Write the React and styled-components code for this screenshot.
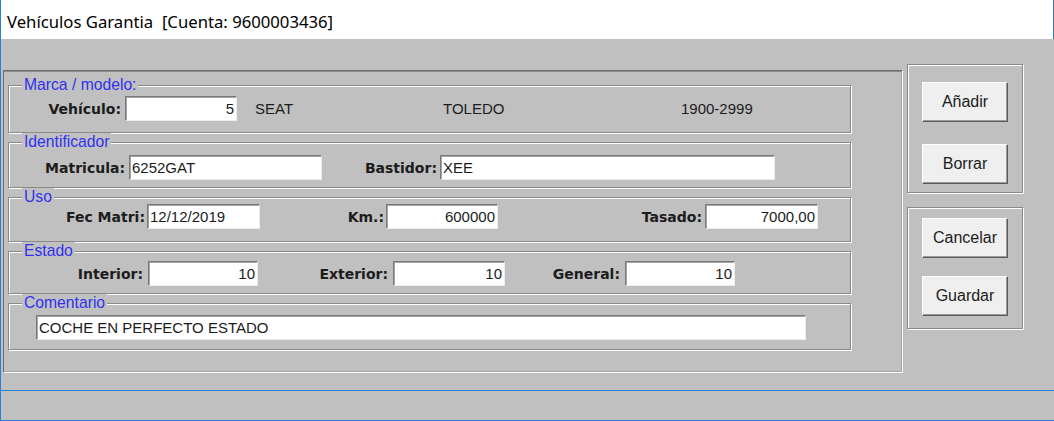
import React from "react";
import styled, { createGlobalStyle } from "styled-components";

const GlobalStyle = createGlobalStyle`
  html, body {
    margin: 0;
    padding: 0;
    background: #c0c0c0;
  }
`;

const Screen = styled.div`
  width: 1054px;
  height: 421px;
  display: flex;
  flex-direction: column;
  background: #c0c0c0;
  font-family: "Liberation Sans", Arial, sans-serif;
  overflow: hidden;
`;

const Window = styled.div`
  height: 391px;
  box-sizing: border-box;
  display: flex;
  flex-direction: column;
  border-left: 1px solid #2b7fd4;
  border-bottom: 1px solid #2b7fd4;
`;

const TitleBar = styled.div`
  height: 39px;
  flex: none;
  box-sizing: border-box;
  display: flex;
  align-items: center;
  padding: 3px 0 0 6px;
  background: #fff;
  border-right: 1px solid #2b7fd4;
  font-family: "Segoe UI", "Noto Sans", sans-serif;
  font-size: 16.7px;
  color: #000;
  white-space: pre;
`;

const Body = styled.div`
  flex: 1;
  display: flex;
  align-items: flex-start;
  padding: 25px 0 0 2px;
`;

/* sunken panel holding the group boxes */
const MainFrame = styled.div`
  width: 900px;
  height: 303px;
  margin-top: 6px;
  box-sizing: border-box;
  display: flex;
  flex-direction: column;
  gap: 9px;
  padding: 14px 0 0 4px;
  border: 1px solid;
  border-color: #6e6e6e #fff #fff #6e6e6e;
  box-shadow: inset 0 1px 0 #8c8c8c, inset -1px 0 0 #a8a8a8, inset 0 -1px 0 #a8a8a8;
`;

const GroupBox = styled.div`
  position: relative;
  width: 843px;
  height: ${(p) => p.$h}px;
  box-sizing: border-box;
  padding-top: ${(p) => p.$pt}px;
  border: 1px solid #8a8a8a;
  box-shadow: inset 1px 1px 0 #fff, 1px 1px 0 #fff;
`;

const Legend = styled.span`
  position: absolute;
  top: -10px;
  left: 13px;
  padding: 0 2px;
  background: #c0c0c0;
  color: #3030f2;
  font-size: 15.7px;
  line-height: 18px;
`;

const Row = styled.div`
  display: flex;
  align-items: center;
  height: 25px;
`;

const Label = styled.div`
  width: ${(p) => p.$w}px;
  box-sizing: border-box;
  padding-right: ${(p) => p.$pr || 4}px;
  text-align: right;
  font-family: "DejaVu Sans", Tahoma, sans-serif;
  font-weight: bold;
  font-size: 14px;
  color: #1c1c1c;
  white-space: nowrap;
`;

const Input = styled.input`
  width: ${(p) => p.$w}px;
  margin-left: ${(p) => p.$ml || 0}px;
  height: 25px;
  box-sizing: border-box;
  padding: 0 2px;
  border: 1px solid;
  border-color: #7a7a7a #ececec #ececec #7a7a7a;
  box-shadow: inset 1px 1px 0 #a4a4a4;
  background: #fff;
  outline: none;
  font-family: "Liberation Sans", Arial, sans-serif;
  font-size: 15px;
  color: #1c1c1c;
  text-align: ${(p) => (p.$right ? "right" : "left")};
`;

const Static = styled.div`
  width: ${(p) => (p.$w ? `${p.$w}px` : "auto")};
  margin-left: ${(p) => p.$ml || 0}px;
  font-size: 15px;
  color: #1c1c1c;
`;

const SideColumn = styled.div`
  display: flex;
  flex-direction: column;
  gap: 14px;
  margin-left: 4px;
`;

const ButtonBox = styled.div`
  width: 116px;
  height: ${(p) => p.$h}px;
  box-sizing: border-box;
  display: flex;
  flex-direction: column;
  align-items: center;
  gap: ${(p) => p.$gap}px;
  padding-top: ${(p) => p.$pt}px;
  border: 1px solid #8a8a8a;
  box-shadow: inset 1px 1px 0 #fff, 1px 1px 0 #fff;
`;

const Button = styled.button`
  width: 86px;
  height: 40px;
  box-sizing: border-box;
  background: #efefef;
  border: 1px solid;
  border-color: #fff #5a5a5a #5a5a5a #fff;
  box-shadow: inset -1px -1px 0 #9a9a9a;
  font-family: "Liberation Sans", Arial, sans-serif;
  font-size: 16px;
  color: #1c1c1c;
  padding: 0;
`;

const BackWindow = styled.div`
  flex: 1;
  border-left: 1px solid #2b7fd4;
  border-bottom: 1px solid #2b7fd4;
`;

export default function App() {
  return (
    <Screen>
      <GlobalStyle />
      <Window>
        <TitleBar>Vehículos Garantia  [Cuenta: 9600003436]</TitleBar>
        <Body>
          <MainFrame>
            <GroupBox $h={48} $pt={10}>
              <Legend>Marca / modelo:</Legend>
              <Row>
                <Label $w={116}>Vehículo:</Label>
                <Input $w={112} $right readOnly value="5" />
                <Static $ml={18} $w={188}>SEAT</Static>
                <Static $w={238}>TOLEDO</Static>
                <Static>1900-2999</Static>
              </Row>
            </GroupBox>
            <GroupBox $h={46} $pt={12}>
              <Legend>Identificador</Legend>
              <Row>
                <Label $w={120}>Matricula:</Label>
                <Input $w={193} readOnly value="6252GAT" />
                <Label $w={118} $pr={3}>Bastidor:</Label>
                <Input $w={335} readOnly value="XEE" />
              </Row>
            </GroupBox>
            <GroupBox $h={45} $pt={6}>
              <Legend>Uso</Legend>
              <Row>
                <Label $w={138} $pr={2}>Fec Matri:</Label>
                <Input $w={113} readOnly value="12/12/2019" />
                <Label $w={126} $pr={2}>Km.:</Label>
                <Input $w={112} $right readOnly value="600000" />
                <Label $w={207} $pr={3}>Tasado:</Label>
                <Input $w={113} $right readOnly value="7000,00" />
              </Row>
            </GroupBox>
            <GroupBox $h={43} $pt={9}>
              <Legend>Estado</Legend>
              <Row>
                <Label $w={139} $pr={5}>Interior:</Label>
                <Input $w={110} $right readOnly value="10" />
                <Label $w={135} $pr={5}>Exterior:</Label>
                <Input $w={112} $right readOnly value="10" />
                <Label $w={120} $pr={5}>General:</Label>
                <Input $w={110} $right readOnly value="10" />
              </Row>
            </GroupBox>
            <GroupBox $h={47} $pt={11}>
              <Legend>Comentario</Legend>
              <Row>
                <Input $w={770} $ml={27} readOnly value="COCHE EN PERFECTO ESTADO" />
              </Row>
            </GroupBox>
          </MainFrame>
          <SideColumn>
            <ButtonBox $h={129} $pt={17} $gap={22}>
              <Button>Añadir</Button>
              <Button>Borrar</Button>
            </ButtonBox>
            <ButtonBox $h={122} $pt={10} $gap={18}>
              <Button>Cancelar</Button>
              <Button>Guardar</Button>
            </ButtonBox>
          </SideColumn>
        </Body>
      </Window>
      <BackWindow />
    </Screen>
  );
}
